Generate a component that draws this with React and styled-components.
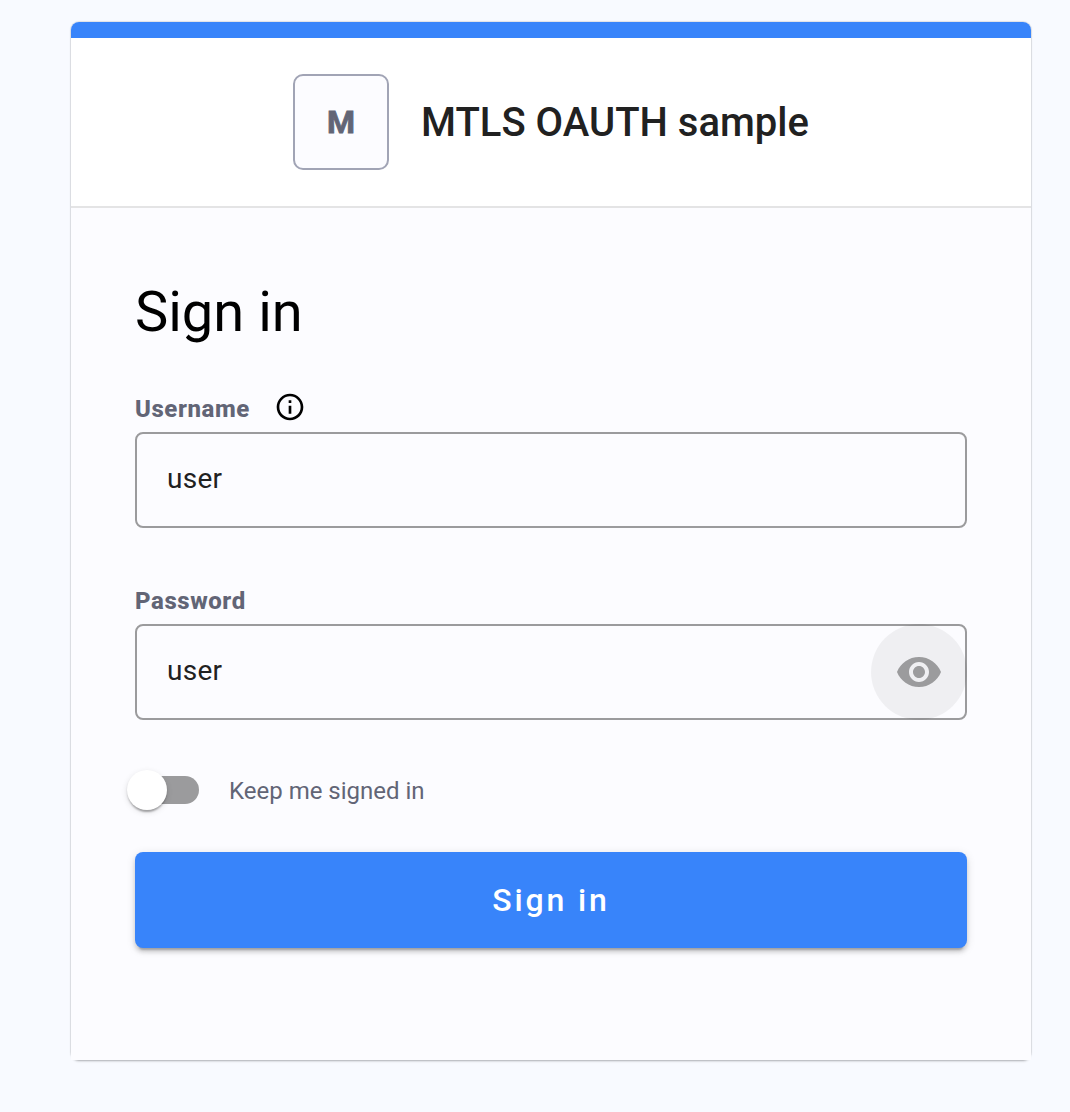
import React, { useState } from "react";
import styled, { createGlobalStyle } from "styled-components";

const GlobalStyle = createGlobalStyle`
  *, *::before, *::after { box-sizing: border-box; }
  html { background: #f8faff; }
  body { margin: 0; font-family: Roboto, "Liberation Sans", sans-serif; color: #212121; }
`;

const Page = styled.div`
  min-height: 1112px;
  padding: 22px 39px 52px 71px;
`;

const Card = styled.main`
  height: 1038px;
  display: flex;
  flex-direction: column;
  border-radius: 8px;
  box-shadow: 0 4px 2px -4px rgba(0, 0, 0, 0.2), 0 2px 2px 0 rgba(0, 0, 0, 0.1),
    0 0 1px 1px rgba(0, 0, 0, 0.1);
`;

const Accent = styled.div`
  height: 16px;
  flex: none;
  background: #3884fa;
  border-radius: 8px 8px 0 0;
`;

const Header = styled.header`
  height: 170px;
  flex: none;
  display: flex;
  align-items: center;
  justify-content: center;
  gap: 32px;
  background: #fff;
  border-bottom: 2px solid #e4e4e5;
`;

const Monogram = styled.div`
  width: 96px;
  height: 96px;
  display: grid;
  place-items: center;
  border: 2px solid #a1a4b5;
  border-radius: 10px;
  background: #fcfcff;
  color: #626576;
  font: 700 32px/1 Roboto, sans-serif;
  -webkit-text-stroke: 0.8px #626576;
`;

const AppName = styled.h1`
  margin: 0;
  padding-top: 2px;
  font-size: 40px;
  font-weight: 500;
  line-height: 48px;
`;

const Form = styled.form`
  flex: 1;
  padding: 72px 64px 0;
  background: #fcfcff;
`;

const Heading = styled.h2`
  margin: 0 0 48px;
  font-size: 56px;
  font-weight: 400;
  line-height: 64px;
  color: #000;
`;

const Field = styled.div`
  margin-bottom: 56px;
`;

const LabelRow = styled.div`
  height: 40px;
  display: flex;
  align-items: center;
  gap: 24px;
  padding-bottom: 8px;
  svg { display: block; margin-bottom: 2px; }
`;

const Label = styled.label`
  padding-top: 2px;
  font-size: 24px;
  font-weight: 800;
  line-height: 32px;
  letter-spacing: 0.58px;
  color: #626576;
`;

const InputFrame = styled.div`
  position: relative;
  height: 96px;
  border: 2px solid #9b9b9d;
  border-radius: 8px;
`;

const Input = styled.input`
  width: 100%;
  height: 100%;
  padding: 0 30px 4px;
  border: 0;
  outline: 0;
  background: transparent;
  color: #212121;
  font: 400 28px/36px Roboto, sans-serif;
  letter-spacing: 0.25px;
`;

const RevealButton = styled.button`
  position: absolute;
  top: -2px;
  right: -2px;
  width: 96px;
  height: 96px;
  padding: 0;
  display: grid;
  place-items: center;
  border: 0;
  border-radius: 50%;
  background: rgba(0, 0, 0, 0.05);
  color: #9b9b9d;
`;

const ToggleRow = styled.label`
  height: 40px;
  margin-top: -6px;
  display: flex;
  align-items: center;
  gap: 30px;
  font-size: 24px;
  line-height: 32px;
  color: #626576;
`;

const ToggleText = styled.span`
  padding-top: 2px;
`;

const Track = styled.span`
  width: 64px;
  height: 28px;
  display: flex;
  align-items: center;
  border-radius: 14px;
  background: #9b9b9d;
`;

const Thumb = styled.span`
  width: 40px;
  height: 40px;
  flex: none;
  margin-left: -8px;
  border-radius: 50%;
  background: #fff;
  box-shadow: 0 4px 2px -2px rgba(0, 0, 0, 0.2), 0 2px 2px 0 rgba(0, 0, 0, 0.14),
    0 2px 6px 0 rgba(0, 0, 0, 0.12);
`;

const Submit = styled.button`
  width: 100%;
  height: 96px;
  margin-top: 42px;
  padding: 0;
  display: block;
  border: 0;
  border-radius: 8px;
  background: #3884fa;
  color: #fff;
  font: 500 32px/40px Roboto, sans-serif;
  letter-spacing: 2.86px;
  box-shadow: 0 6px 2px -4px rgba(0, 0, 0, 0.2), 0 4px 4px 0 rgba(0, 0, 0, 0.14),
    0 2px 10px 0 rgba(0, 0, 0, 0.12);
`;

function InfoIcon() {
  return (
    <svg width="32" height="32" viewBox="0 0 24 24" aria-hidden="true">
      <path d="M11 7h2v2h-2zm0 4h2v6h-2zm1-9C6.48 2 2 6.48 2 12s4.48 10 10 10 10-4.48 10-10S17.52 2 12 2zm0 18c-4.41 0-8-3.59-8-8s3.59-8 8-8 8 3.59 8 8-3.59 8-8 8z" />
    </svg>
  );
}

function EyeIcon() {
  return (
    <svg width="48" height="48" viewBox="0 0 24 24" fill="currentColor" aria-hidden="true">
      <path d="M12 4.5C7 4.5 2.73 7.61 1 12c1.73 4.39 6 7.5 11 7.5s9.27-3.11 11-7.5c-1.73-4.39-6-7.5-11-7.5zM12 17c-2.76 0-5-2.24-5-5s2.24-5 5-5 5 2.24 5 5-2.24 5-5 5zm0-8c-1.66 0-3 1.34-3 3s1.34 3 3 3 3-1.34 3-3-1.34-3-3-3z" />
    </svg>
  );
}

export default function App() {
  const [username, setUsername] = useState("user");
  const [password, setPassword] = useState("user");
  return (
    <Page>
      <GlobalStyle />
      <Card>
        <Accent />
        <Header>
          <Monogram>M</Monogram>
          <AppName>MTLS OAUTH sample</AppName>
        </Header>
        <Form onSubmit={(e) => e.preventDefault()}>
          <Heading>Sign in</Heading>
          <Field>
            <LabelRow>
              <Label htmlFor="username">Username</Label>
              <InfoIcon />
            </LabelRow>
            <InputFrame>
              <Input id="username" value={username} onChange={(e) => setUsername(e.target.value)} />
            </InputFrame>
          </Field>
          <Field>
            <LabelRow>
              <Label htmlFor="password">Password</Label>
            </LabelRow>
            <InputFrame>
              <Input id="password" value={password} onChange={(e) => setPassword(e.target.value)} />
              <RevealButton type="button" aria-label="Toggle password visibility">
                <EyeIcon />
              </RevealButton>
            </InputFrame>
          </Field>
          <ToggleRow>
            <Track>
              <Thumb />
            </Track>
            <ToggleText>Keep me signed in</ToggleText>
          </ToggleRow>
          <Submit type="submit">Sign in</Submit>
        </Form>
      </Card>
    </Page>
  );
}
